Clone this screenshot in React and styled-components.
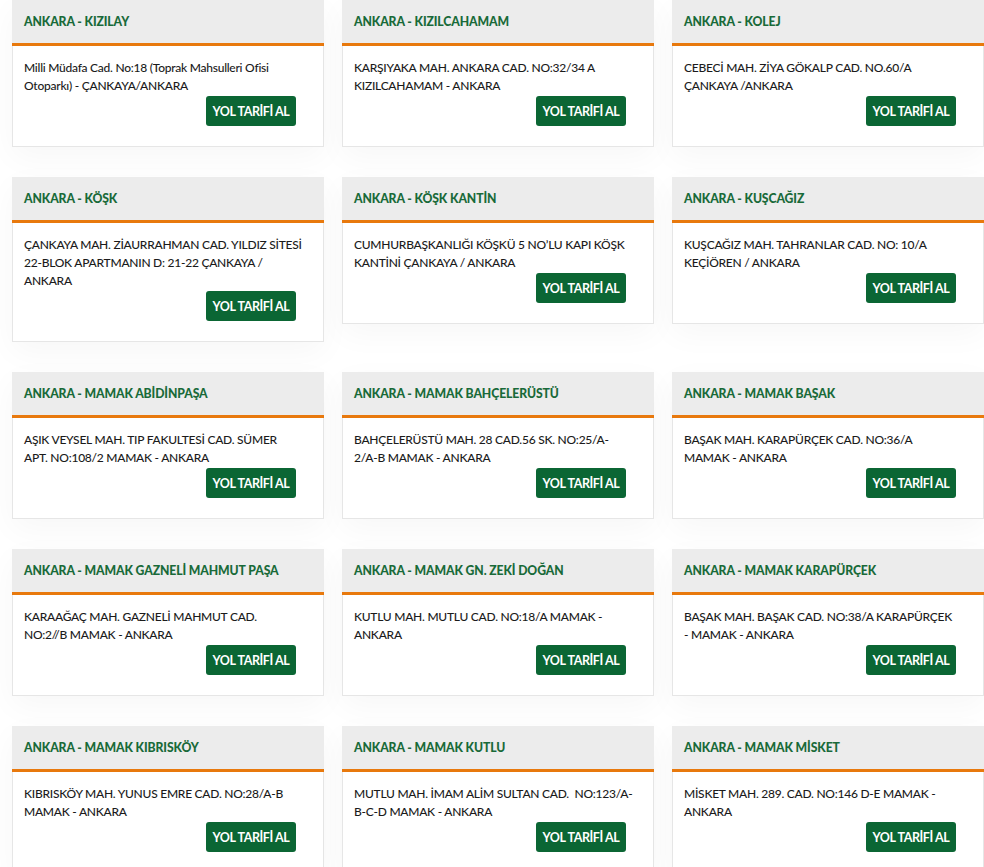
import React from 'react';
import styled, { createGlobalStyle } from 'styled-components';

const GlobalStyle = createGlobalStyle`
  html, body {
    margin: 0;
    padding: 0;
    background: #ffffff;
  }
  body {
    font-family: Lato, "Noto Sans", Arial, sans-serif;
    color: #1b1b1b;
  }
`;

const BranchGrid = styled.main`
  display: grid;
  grid-template-columns: repeat(3, 312px);
  column-gap: 18px;
  row-gap: 30px;
  align-items: start;
  padding: 0 0 40px 12px;
`;

const BranchCard = styled.section`
  display: flex;
  flex-direction: column;
  background: #fff;
  box-shadow: 0 10px 30px rgba(0, 0, 0, 0.035);
`;

const CardHeader = styled.header`
  height: 43px;
  display: flex;
  align-items: center;
  padding: 0 12px;
  background: #ececec;
  border-bottom: 3px solid #e8790d;
`;

const CardTitle = styled.h3`
  margin: 0;
  font-size: 12.2px;
  font-weight: 900;
  color: #196a39;
  letter-spacing: -0.1px;
  white-space: nowrap;
`;

const CardBody = styled.div`
  display: flex;
  flex-direction: column;
  padding: 13px 27px 20px 11px;
  border: 1px solid #e6e6e6;
  border-top: none;
`;

const Address = styled.p`
  margin: 0;
  font-size: 12px;
  line-height: 18px;
  font-weight: 500;
  letter-spacing: -0.25px;
  color: #1b1b1b;
`;

const AddressLine = styled.span`
  display: block;
  white-space: nowrap;
`;

const DirectionsButton = styled.a`
  align-self: flex-end;
  display: inline-flex;
  align-items: center;
  justify-content: center;
  width: 90px;
  height: 30px;
  margin-top: 1px;
  border-radius: 3px;
  background: #0b6634;
  color: #fff;
  font-size: 12.5px;
  font-weight: 700;
  letter-spacing: -0.4px;
  text-decoration: none;
  cursor: pointer;
`;

const branches = [
  { title: 'ANKARA - KIZILAY', lines: ['Milli Müdafa Cad. No:18 (Toprak Mahsulleri Ofisi', 'Otoparkı) - ÇANKAYA/ANKARA'] },
  { title: 'ANKARA - KIZILCAHAMAM', lines: ['KARŞIYAKA MAH. ANKARA CAD. NO:32/34 A', 'KIZILCAHAMAM - ANKARA'] },
  { title: 'ANKARA - KOLEJ', lines: ['CEBECİ MAH. ZİYA GÖKALP CAD. NO.60/A', 'ÇANKAYA /ANKARA'] },
  { title: 'ANKARA - KÖŞK', lines: ['ÇANKAYA MAH. ZİAURRAHMAN CAD. YILDIZ SİTESİ', '22-BLOK APARTMANIN D: 21-22 ÇANKAYA /', 'ANKARA'] },
  { title: 'ANKARA - KÖŞK KANTİN', lines: ['CUMHURBAŞKANLIĞI KÖŞKÜ 5 NO\u2019LU KAPI KÖŞK', 'KANTİNİ ÇANKAYA / ANKARA'] },
  { title: 'ANKARA - KUŞCAĞIZ', lines: ['KUŞCAĞIZ MAH. TAHRANLAR CAD. NO: 10/A', 'KEÇİÖREN / ANKARA'] },
  { title: 'ANKARA - MAMAK ABİDİNPAŞA', lines: ['AŞIK VEYSEL MAH. TIP FAKULTESİ CAD. SÜMER', 'APT. NO:108/2 MAMAK - ANKARA'] },
  { title: 'ANKARA - MAMAK BAHÇELERÜSTÜ', lines: ['BAHÇELERÜSTÜ MAH. 28 CAD.56 SK. NO:25/A-', '2/A-B MAMAK - ANKARA'] },
  { title: 'ANKARA - MAMAK BAŞAK', lines: ['BAŞAK MAH. KARAPÜRÇEK CAD. NO:36/A', 'MAMAK - ANKARA'] },
  { title: 'ANKARA - MAMAK GAZNELİ MAHMUT PAŞA', lines: ['KARAAĞAÇ MAH. GAZNELİ MAHMUT CAD.', 'NO:2//B MAMAK - ANKARA'] },
  { title: 'ANKARA - MAMAK GN. ZEKİ DOĞAN', lines: ['KUTLU MAH. MUTLU CAD. NO:18/A MAMAK -', 'ANKARA'] },
  { title: 'ANKARA - MAMAK KARAPÜRÇEK', lines: ['BAŞAK MAH. BAŞAK CAD. NO:38/A KARAPÜRÇEK', '- MAMAK - ANKARA'] },
  { title: 'ANKARA - MAMAK KIBRISKÖY', lines: ['KIBRISKÖY MAH. YUNUS EMRE CAD. NO:28/A-B', 'MAMAK - ANKARA'] },
  { title: 'ANKARA - MAMAK KUTLU', lines: ['MUTLU MAH. İMAM ALİM SULTAN CAD.\u00a0 NO:123/A-', 'B-C-D MAMAK - ANKARA'] },
  { title: 'ANKARA - MAMAK MİSKET', lines: ['MİSKET MAH. 289. CAD. NO:146 D-E MAMAK -', 'ANKARA'] },
];

const App = () => (
  <>
    <GlobalStyle />
    <BranchGrid>
      {branches.map((branch) => (
        <BranchCard key={branch.title}>
          <CardHeader>
            <CardTitle>{branch.title}</CardTitle>
          </CardHeader>
          <CardBody>
            <Address>
              {branch.lines.map((line, i) => (
                <AddressLine key={i}>{line}</AddressLine>
              ))}
            </Address>
            <DirectionsButton>YOL TARİFİ AL</DirectionsButton>
          </CardBody>
        </BranchCard>
      ))}
    </BranchGrid>
  </>
);

export default App;
